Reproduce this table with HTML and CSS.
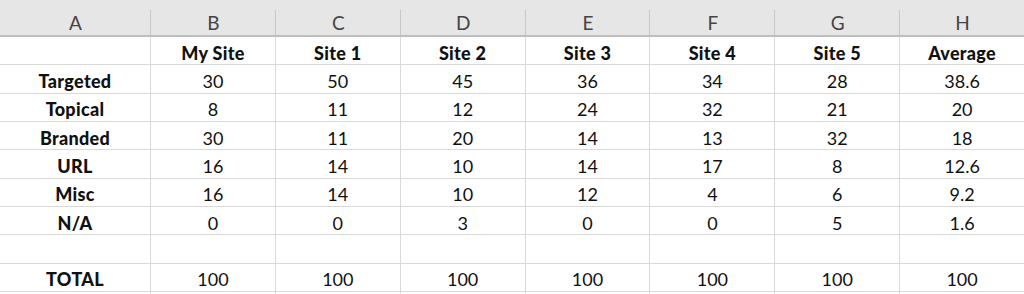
FILE: index.html
```html
<!DOCTYPE html>
<html>
<head>
<meta charset="utf-8">
<link rel="stylesheet" href="styles.css">
</head>
<body>
<div class="sheet">
  <div class="hd">A</div><div class="hd">B</div><div class="hd">C</div><div class="hd">D</div><div class="hd">E</div><div class="hd">F</div><div class="hd">G</div><div class="hd">H</div>

  <div class="c"></div><div class="c b">My Site</div><div class="c b">Site 1</div><div class="c b">Site 2</div><div class="c b">Site 3</div><div class="c b">Site 4</div><div class="c b">Site 5</div><div class="c b">Average</div>

  <div class="c b">Targeted</div><div class="c">30</div><div class="c">50</div><div class="c">45</div><div class="c">36</div><div class="c">34</div><div class="c">28</div><div class="c">38.6</div>

  <div class="c b">Topical</div><div class="c">8</div><div class="c">11</div><div class="c">12</div><div class="c">24</div><div class="c">32</div><div class="c">21</div><div class="c">20</div>

  <div class="c b">Branded</div><div class="c">30</div><div class="c">11</div><div class="c">20</div><div class="c">14</div><div class="c">13</div><div class="c">32</div><div class="c">18</div>

  <div class="c b">URL</div><div class="c">16</div><div class="c">14</div><div class="c">10</div><div class="c">14</div><div class="c">17</div><div class="c">8</div><div class="c">12.6</div>

  <div class="c b">Misc</div><div class="c">16</div><div class="c">14</div><div class="c">10</div><div class="c">12</div><div class="c">4</div><div class="c">6</div><div class="c">9.2</div>

  <div class="c b">N/A</div><div class="c">0</div><div class="c">0</div><div class="c">3</div><div class="c">0</div><div class="c">0</div><div class="c">5</div><div class="c">1.6</div>

  <div class="c"></div><div class="c"></div><div class="c"></div><div class="c"></div><div class="c"></div><div class="c"></div><div class="c"></div><div class="c"></div>

  <div class="c b">TOTAL</div><div class="c">100</div><div class="c">100</div><div class="c">100</div><div class="c">100</div><div class="c">100</div><div class="c">100</div><div class="c">100</div>

  <div class="c"></div><div class="c"></div><div class="c"></div><div class="c"></div><div class="c"></div><div class="c"></div><div class="c"></div><div class="c"></div>
</div>
</body>
</html>
```

FILE: styles.css
```css
html, body {
  margin: 0;
  padding: 0;
  background: #ffffff;
  overflow: hidden;
}

.sheet {
  display: grid;
  grid-template-columns: 151px repeat(7, 124.86px);
  grid-template-rows: 37px repeat(10, 28.33px);
  width: 1024px;
  height: 294px;
  overflow: hidden;
  font-family: Lato, "Open Sans", sans-serif;
  color: #111111;
}

.hd {
  box-sizing: border-box;
  background-color: #e6e6e6;
  background-image: linear-gradient(#c6c6c6, #c6c6c6);
  background-repeat: no-repeat;
  background-position: right 10px;
  background-size: 1px calc(100% - 10px);
  border-bottom: 2px solid #bdbdbd;
  display: flex;
  align-items: center;
  justify-content: center;
  padding-top: 10px;
  font-size: 19px;
  color: #444444;
}

.c {
  box-sizing: border-box;
  border-right: 1px solid #d9d9d9;
  border-bottom: 1px solid #d9d9d9;
  display: flex;
  align-items: center;
  justify-content: center;
  padding-top: 4px;
  font-size: 18px;
  white-space: nowrap;
}

.b {
  font-weight: 900;
  letter-spacing: 0.3px;
}
```
